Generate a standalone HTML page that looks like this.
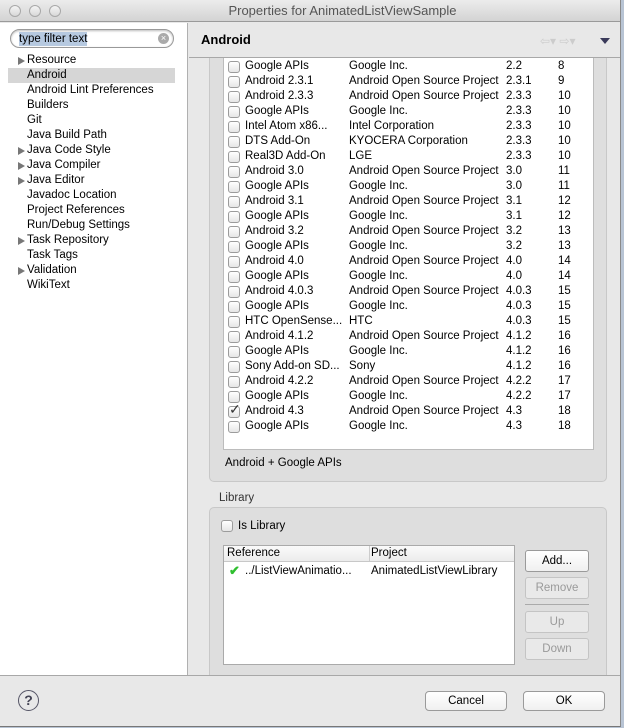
<!DOCTYPE html>
<html><head><meta charset="utf-8"><style>
*{margin:0;padding:0;box-sizing:border-box}
body{width:624px;height:728px;overflow:hidden;background:#b8c4d4;font-family:"Liberation Sans",sans-serif;font-size:11.5px;color:#000;position:relative}
.a{position:absolute}
#win{left:0;top:0;width:621px;height:727px;background:#e8e8e8;border-right:1px solid #8a8a8a;border-bottom:1px solid #777;overflow:hidden}
#title{left:0;top:0;width:621px;height:22px;background:linear-gradient(#ececec,#d3d3d3);border-bottom:1px solid #9a9a9a;text-align:center;font-size:13px;line-height:22px;color:#555;padding-left:64px}
.tl{top:5px;width:12px;height:12px;border-radius:50%;border:1px solid #a8a8a8;background:linear-gradient(#f4f4f4,#d8d8d8)}
#left{left:0;top:23px;width:188px;height:652px;background:#fff;border-right:1px solid #b0b0b0}
#search{left:10px;top:6px;width:164px;height:19px;border:1px solid #999;border-radius:10px;background:#fff;box-shadow:inset 0 1px 2px #bbb}
.ti{left:0;height:15px;line-height:15px;font-size:11.5px;white-space:nowrap}
.tri{width:0;height:0;border-left:7px solid #777;border-top:4px solid transparent;border-bottom:4px solid transparent;position:absolute;left:18px;top:4px}
#hdr{left:189px;top:23px;width:432px;height:35px;background:#e8e8e8;border-bottom:1px solid #a8a8a8;font-weight:bold;font-size:13px;line-height:33px;padding-left:12px}
#grp1{left:209px;top:58px;width:398px;height:424px;background:#dedede;border:1px solid #c8c8c8;border-top:none;border-radius:0 0 5px 5px}
#tbl{left:223px;top:58px;width:371px;height:392px;background:#fff;border:1px solid #bcbcbc;border-top:none}
.r{position:absolute;left:0;height:15px;line-height:15px;white-space:nowrap;font-size:11.5px;margin-top:1px}
.cb{position:absolute;left:4px;top:2px;width:12px;height:12px;border:1px solid #9c9c9c;border-radius:3px;background:linear-gradient(#fff,#e6e6e6)}
.c1{position:absolute;left:21px}.c2{position:absolute;left:125px}.c3{position:absolute;left:282px}.c4{position:absolute;left:334px}
.btn{position:absolute;border:1px solid #9a9a9a;border-radius:3px;background:linear-gradient(#fff,#f0f0f0);text-align:center;font-size:11.5px}
.dis{color:#9a9a9a;border-color:#c4c4c4;background:#e9e9e9}
</style></head><body>
<div id="win" class="a">
<div id="title" class="a">Properties for AnimatedListViewSample</div>
<div class="a tl" style="left:9px"></div><div class="a tl" style="left:29px"></div><div class="a tl" style="left:49px"></div>
<div id="left" class="a">
<div id="search" class="a"><span style="position:absolute;left:8px;top:2px;background:#b6c9e0;line-height:14px">type filter text</span><span style="position:absolute;right:4px;top:3px;width:11px;height:11px;border-radius:50%;background:#aaa;color:#fff;font-size:9px;line-height:11px;text-align:center">×</span></div>
<div class="a" style="left:8px;top:45px;width:167px;height:15px;background:#d6d6d6"></div>
<div class="a ti" style="top:30px"><i class="tri"></i><span style="position:absolute;left:27px">Resource</span></div>
<div class="a ti" style="top:45px"><span style="position:absolute;left:27px">Android</span></div>
<div class="a ti" style="top:60px"><span style="position:absolute;left:27px">Android Lint Preferences</span></div>
<div class="a ti" style="top:75px"><span style="position:absolute;left:27px">Builders</span></div>
<div class="a ti" style="top:90px"><span style="position:absolute;left:27px">Git</span></div>
<div class="a ti" style="top:105px"><span style="position:absolute;left:27px">Java Build Path</span></div>
<div class="a ti" style="top:120px"><i class="tri"></i><span style="position:absolute;left:27px">Java Code Style</span></div>
<div class="a ti" style="top:135px"><i class="tri"></i><span style="position:absolute;left:27px">Java Compiler</span></div>
<div class="a ti" style="top:150px"><i class="tri"></i><span style="position:absolute;left:27px">Java Editor</span></div>
<div class="a ti" style="top:165px"><span style="position:absolute;left:27px">Javadoc Location</span></div>
<div class="a ti" style="top:180px"><span style="position:absolute;left:27px">Project References</span></div>
<div class="a ti" style="top:195px"><span style="position:absolute;left:27px">Run/Debug Settings</span></div>
<div class="a ti" style="top:210px"><i class="tri"></i><span style="position:absolute;left:27px">Task Repository</span></div>
<div class="a ti" style="top:225px"><span style="position:absolute;left:27px">Task Tags</span></div>
<div class="a ti" style="top:240px"><i class="tri"></i><span style="position:absolute;left:27px">Validation</span></div>
<div class="a ti" style="top:255px"><span style="position:absolute;left:27px">WikiText</span></div>
</div>
<div id="hdr" class="a">Android</div>
<div class="a" style="left:540px;top:34px;color:#ccc;font-size:12px">⇦▾ ⇨▾</div>
<div class="a" style="left:600px;top:38px;width:0;height:0;border-top:6px solid #3a3a5a;border-left:5px solid transparent;border-right:5px solid transparent"></div>
<div id="grp1" class="a"></div>
<div id="tbl" class="a">
<div class="r" style="top:0"><i class="cb"></i><span class="c1">Google APIs</span><span class="c2">Google Inc.</span><span class="c3">2.2</span><span class="c4">8</span></div>
<div class="r" style="top:15px"><i class="cb"></i><span class="c1">Android 2.3.1</span><span class="c2">Android Open Source Project</span><span class="c3">2.3.1</span><span class="c4">9</span></div>
<div class="r" style="top:30px"><i class="cb"></i><span class="c1">Android 2.3.3</span><span class="c2">Android Open Source Project</span><span class="c3">2.3.3</span><span class="c4">10</span></div>
<div class="r" style="top:45px"><i class="cb"></i><span class="c1">Google APIs</span><span class="c2">Google Inc.</span><span class="c3">2.3.3</span><span class="c4">10</span></div>
<div class="r" style="top:60px"><i class="cb"></i><span class="c1">Intel Atom x86...</span><span class="c2">Intel Corporation</span><span class="c3">2.3.3</span><span class="c4">10</span></div>
<div class="r" style="top:75px"><i class="cb"></i><span class="c1">DTS Add-On</span><span class="c2">KYOCERA Corporation</span><span class="c3">2.3.3</span><span class="c4">10</span></div>
<div class="r" style="top:90px"><i class="cb"></i><span class="c1">Real3D Add-On</span><span class="c2">LGE</span><span class="c3">2.3.3</span><span class="c4">10</span></div>
<div class="r" style="top:105px"><i class="cb"></i><span class="c1">Android 3.0</span><span class="c2">Android Open Source Project</span><span class="c3">3.0</span><span class="c4">11</span></div>
<div class="r" style="top:120px"><i class="cb"></i><span class="c1">Google APIs</span><span class="c2">Google Inc.</span><span class="c3">3.0</span><span class="c4">11</span></div>
<div class="r" style="top:135px"><i class="cb"></i><span class="c1">Android 3.1</span><span class="c2">Android Open Source Project</span><span class="c3">3.1</span><span class="c4">12</span></div>
<div class="r" style="top:150px"><i class="cb"></i><span class="c1">Google APIs</span><span class="c2">Google Inc.</span><span class="c3">3.1</span><span class="c4">12</span></div>
<div class="r" style="top:165px"><i class="cb"></i><span class="c1">Android 3.2</span><span class="c2">Android Open Source Project</span><span class="c3">3.2</span><span class="c4">13</span></div>
<div class="r" style="top:180px"><i class="cb"></i><span class="c1">Google APIs</span><span class="c2">Google Inc.</span><span class="c3">3.2</span><span class="c4">13</span></div>
<div class="r" style="top:195px"><i class="cb"></i><span class="c1">Android 4.0</span><span class="c2">Android Open Source Project</span><span class="c3">4.0</span><span class="c4">14</span></div>
<div class="r" style="top:210px"><i class="cb"></i><span class="c1">Google APIs</span><span class="c2">Google Inc.</span><span class="c3">4.0</span><span class="c4">14</span></div>
<div class="r" style="top:225px"><i class="cb"></i><span class="c1">Android 4.0.3</span><span class="c2">Android Open Source Project</span><span class="c3">4.0.3</span><span class="c4">15</span></div>
<div class="r" style="top:240px"><i class="cb"></i><span class="c1">Google APIs</span><span class="c2">Google Inc.</span><span class="c3">4.0.3</span><span class="c4">15</span></div>
<div class="r" style="top:255px"><i class="cb"></i><span class="c1">HTC OpenSense...</span><span class="c2">HTC</span><span class="c3">4.0.3</span><span class="c4">15</span></div>
<div class="r" style="top:270px"><i class="cb"></i><span class="c1">Android 4.1.2</span><span class="c2">Android Open Source Project</span><span class="c3">4.1.2</span><span class="c4">16</span></div>
<div class="r" style="top:285px"><i class="cb"></i><span class="c1">Google APIs</span><span class="c2">Google Inc.</span><span class="c3">4.1.2</span><span class="c4">16</span></div>
<div class="r" style="top:300px"><i class="cb"></i><span class="c1">Sony Add-on SD...</span><span class="c2">Sony</span><span class="c3">4.1.2</span><span class="c4">16</span></div>
<div class="r" style="top:315px"><i class="cb"></i><span class="c1">Android 4.2.2</span><span class="c2">Android Open Source Project</span><span class="c3">4.2.2</span><span class="c4">17</span></div>
<div class="r" style="top:330px"><i class="cb"></i><span class="c1">Google APIs</span><span class="c2">Google Inc.</span><span class="c3">4.2.2</span><span class="c4">17</span></div>
<div class="r" style="top:345px"><i class="cb"></i><span style="position:absolute;left:5px;top:-2px;font-size:14px;color:#333">✓</span><span class="c1">Android 4.3</span><span class="c2">Android Open Source Project</span><span class="c3">4.3</span><span class="c4">18</span></div>
<div class="r" style="top:360px"><i class="cb"></i><span class="c1">Google APIs</span><span class="c2">Google Inc.</span><span class="c3">4.3</span><span class="c4">18</span></div>
</div>
<div class="a" style="left:225px;top:457px">Android + Google APIs</div>
<div class="a" style="left:219px;top:492px;color:#333">Library</div>
<div class="a" style="left:209px;top:507px;width:398px;height:175px;background:#dedede;border:1px solid #c8c8c8;border-radius:5px"></div>
<div class="a" style="left:221px;top:520px;width:12px;height:12px;border:1px solid #9c9c9c;border-radius:3px;background:linear-gradient(#fff,#e6e6e6)"></div>
<div class="a" style="left:238px;top:520px">Is Library</div>
<div class="a" style="left:223px;top:545px;width:292px;height:120px;background:#fff;border:1px solid #aaa">
<div style="position:absolute;left:0;top:0;width:290px;height:16px;border-bottom:1px solid #c8c8c8;background:linear-gradient(#fafafa,#ececec)"><span style="position:absolute;left:3px;top:1px">Reference</span><span style="position:absolute;left:145px;top:0;height:15px;border-left:1px solid #ccc"></span><span style="position:absolute;left:147px;top:1px">Project</span></div>
<span style="position:absolute;left:5px;top:17px;color:#2fbf2f;font-size:13px;font-weight:bold">✔</span>
<span style="position:absolute;left:21px;top:19px">../ListViewAnimatio...</span>
<span style="position:absolute;left:147px;top:19px">AnimatedListViewLibrary</span>
</div>
<div class="btn" style="left:525px;top:550px;width:64px;height:22px;line-height:20px">Add...</div>
<div class="btn dis" style="left:525px;top:577px;width:64px;height:22px;line-height:20px">Remove</div>
<div class="a" style="left:525px;top:604px;width:64px;height:1px;background:#aaa"></div>
<div class="btn dis" style="left:525px;top:611px;width:64px;height:22px;line-height:20px">Up</div>
<div class="btn dis" style="left:525px;top:638px;width:64px;height:22px;line-height:20px">Down</div>
<div class="a" style="left:0;top:675px;width:621px;height:53px;background:#e8e8e8;border-top:1px solid #a8a8a8"></div>
<div class="a" style="left:18px;top:690px;width:21px;height:21px;border:1.5px solid #556;border-radius:50%;text-align:center;font-weight:bold;font-size:14px;line-height:18px;color:#445">?</div>
<div class="btn" style="left:425px;top:691px;width:82px;height:20px;line-height:18px;border-radius:4px">Cancel</div>
<div class="btn" style="left:523px;top:691px;width:82px;height:20px;line-height:18px;border-radius:4px">OK</div>
</div>
</body></html>
